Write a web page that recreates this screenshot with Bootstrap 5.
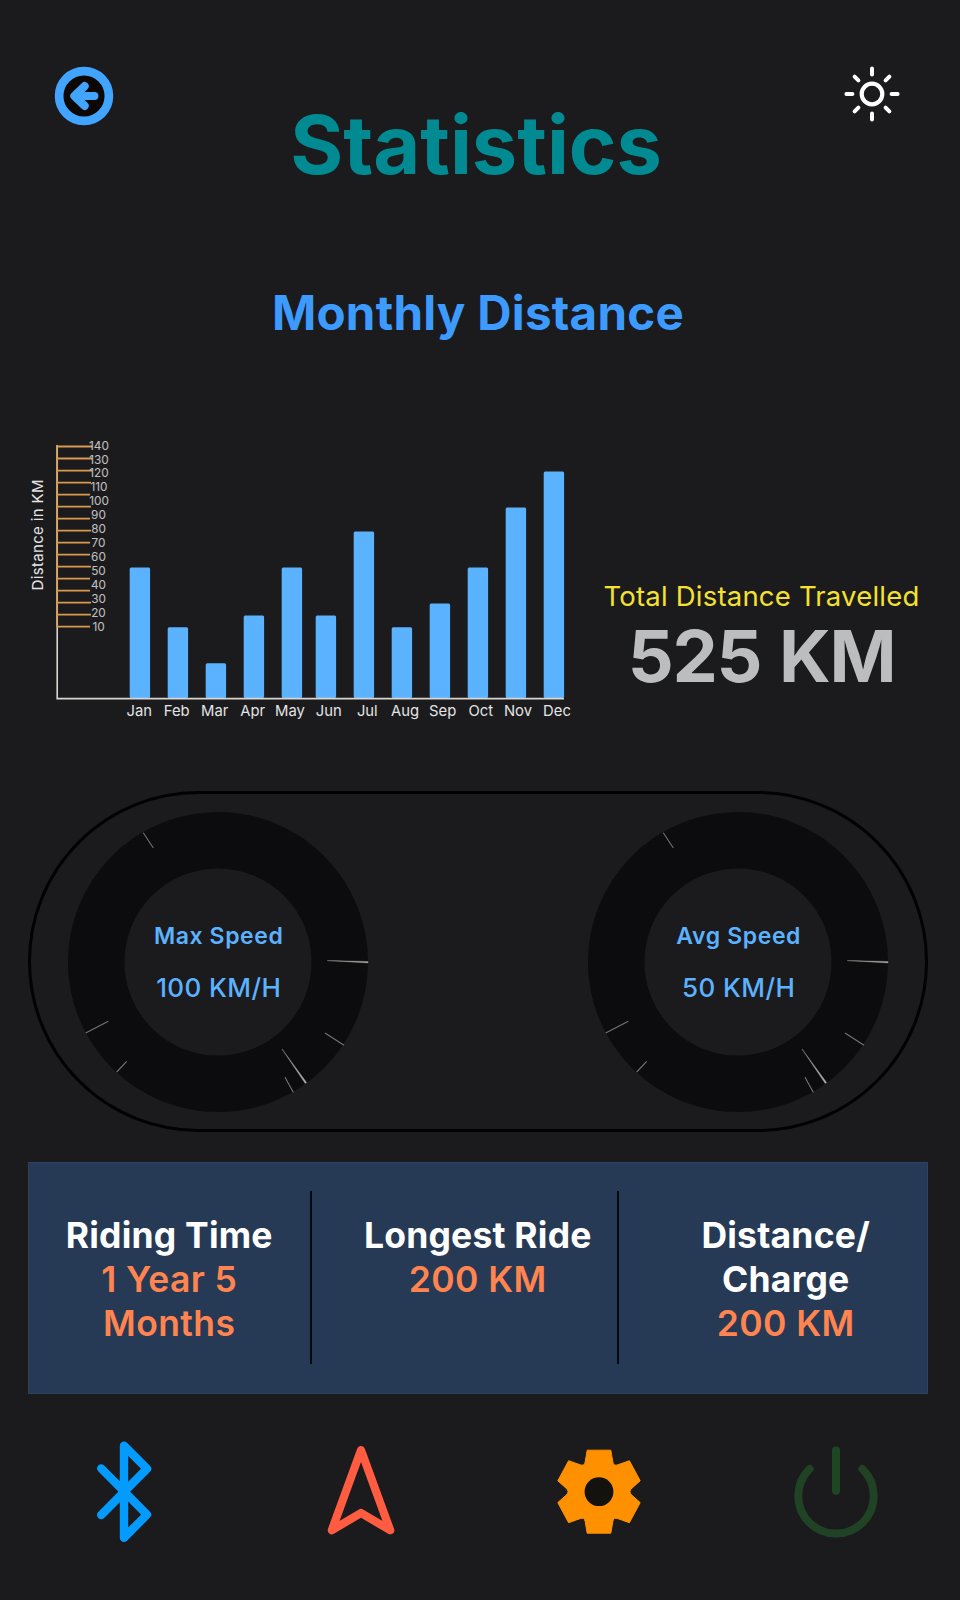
<!DOCTYPE html>
<html lang="en" data-bs-theme="dark">
<head>
<meta charset="utf-8">
<meta name="viewport" content="width=device-width, initial-scale=1">
<title>Statistics</title>
<link rel="stylesheet" href="https://cdn.jsdelivr.net/npm/bootstrap@5.3.0/dist/css/bootstrap.min.css">
<style>
  body { background: #1b1b1d; font-family: Inter, "Liberation Sans", sans-serif; }
  .screen { width: 960px; height: 1600px; }
  .screen svg { display: block; flex: none; }
  .top-bar { height: 283px; padding: 65.7px 60px 0 54px; }
  .page-title { margin-top: 34.3px; font-size: 81px; line-height: 90px; font-weight: 700; color: #018a92; padding-right: 6px; }
  .section-title { font-size: 47.5px; line-height: 60px; font-weight: 700; color: #3d9bff; letter-spacing: .25px; padding-right: 4px; }
  .chart-row { margin-top: 87px; height: 300px; }
  .chart text { fill: #e4e4e4; }
  .total-box { width: 343px; padding-top: 147px; }
  .total-label { font-size: 27.5px; line-height: 38px; color: #f5e131; letter-spacing: .2px; }
  .total-value { font-size: 72px; line-height: 80px; font-weight: 700; color: #bcbdbf; margin-top: .5px; letter-spacing: -1.3px; word-spacing: 2px; }
  .speeds { margin: 61px 32px 0 28px; height: 341px; border: 3px solid #020203; border-radius: 171px; padding: 0 36px; }
  .dial { width: 302px; height: 302px; }
  .dial-text { position: absolute; inset: 0; color: #5cb2ff; font-weight: 500; padding-left: 1.4px; }
  .dial-name { font-size: 23px; line-height: 30px; margin-top: 110px; font-weight: 600; letter-spacing: .6px; }
  .dial-value { font-size: 26px; line-height: 30px; margin-top: 22px; letter-spacing: .4px; }
  .summary { margin: 30px 32.5px 0 28px; height: 231.5px; background: #263a55; border: 1px solid #2b4263; }
  .summary-cell { padding-top: 51px; font-size: 35.5px; line-height: 44px; font-weight: 700; color: #fff; letter-spacing: .2px; }
  .summary-cell b { font-weight: 600; color: #ff8450; display: block; letter-spacing: .4px; }
  .cell-riding { width: 280.5px; }
  .cell-longest { width: 305.5px; padding-left: 27px; }
  .cell-charge { padding-left: 26px; }
  .rule { width: 2px; height: 173px; background: #040910; margin-top: 28px; flex: none; }
  .bottom-nav { margin-top: 42.5px; padding: 0 74px; }
</style>
</head>
<body>
<main class="screen overflow-hidden">
  <header class="top-bar d-flex align-items-start">
    <svg width="60" height="60" viewBox="-30 -30 60 60" fill="none" stroke="#41a5ff">
      <circle r="24.9" stroke-width="8.7" fill="#0c0806"/>
      <path d="M10.3 0H-8M.6-9.8L-9.6 0L.6 9.8" stroke-width="8.2" stroke-linecap="round" stroke-linejoin="round"/>
      <path d="M-9 0L0-8V8Z" fill="#41a5ff" stroke="none"/>
    </svg>
    <h1 class="page-title flex-grow-1 text-center mb-0">Statistics</h1>
    <svg width="56" height="56" viewBox="-28 -28 56 56" fill="none" stroke="#fff" stroke-width="4.2">
      <circle r="10.3"/>
      <path stroke-linecap="round" stroke-width="4" d="M0-25.6V-19.6M0 19.6V25.6M-25.6 0H-19.6M19.6 0H25.6M-17.4-17.4L-13.6-13.6M17.4-17.4L13.6-13.6M-17.4 17.4L-13.6 13.6M17.4 17.4L13.6 13.6"/>
    </svg>
  </header>

  <h2 class="section-title text-center mb-0">Monthly Distance</h2>

  <section class="chart-row d-flex">
    <svg class="chart" width="590" height="300" viewBox="0 430 590 300">
      <g fill="#5bb2ff">
        <rect x="129.7" y="567.5" width="20.4" height="130.5" rx="1.5"/>
        <rect x="167.7" y="627.3" width="20.4" height="70.7" rx="1.5"/>
        <rect x="205.7" y="663.3" width="20.4" height="34.7" rx="1.5"/>
        <rect x="243.7" y="615.4" width="20.4" height="82.6" rx="1.5"/>
        <rect x="281.7" y="567.5" width="20.4" height="130.5" rx="1.5"/>
        <rect x="315.7" y="615.4" width="20.4" height="82.6" rx="1.5"/>
        <rect x="353.7" y="531.5" width="20.4" height="166.5" rx="1.5"/>
        <rect x="391.7" y="627.3" width="20.4" height="70.7" rx="1.5"/>
        <rect x="429.7" y="603.4" width="20.4" height="94.6" rx="1.5"/>
        <rect x="467.7" y="567.5" width="20.4" height="130.5" rx="1.5"/>
        <rect x="505.7" y="507.5" width="20.4" height="190.5" rx="1.5"/>
        <rect x="543.7" y="471.5" width="20.4" height="226.5" rx="1.5"/>
      </g>
      <path d="M57.2 445V698.6H564" fill="none" stroke="#d9d6cf" stroke-width="1.6"/>
      <path d="M57.2 445V627" stroke="#e0a860" stroke-width="1.7"/>
      <path d="M57 446.5H92M57 458.5H92M57 470.6H92M57 482.6H91M57 494.6H90M57 506.6H91M57 518.7H90M57 530.7H91M57 542.7H90M57 554.7H90M57 566.7H91M57 578.7H90M57 590.7H90M57 602.7H91M57 614.7H91M57 626.7H90" stroke="#d99a4e" stroke-width="1.8"/>
      <g font-size="11.8" text-anchor="middle" style="opacity:.82">
        <text x="99" y="449.5">140</text><text x="99" y="463.5">130</text><text x="99" y="477.4">120</text><text x="99" y="491.4">110</text><text x="99" y="505.4">100</text><text x="98.5" y="519.4">90</text><text x="98.5" y="533.4">80</text><text x="98.5" y="547.3">70</text><text x="98.5" y="561.3">60</text><text x="98.5" y="575.3">50</text><text x="98.5" y="589.3">40</text><text x="98.5" y="603.2">30</text><text x="98.5" y="617.2">20</text><text x="98.5" y="631.2">10</text>
      </g>
      <g font-size="14.8" text-anchor="middle">
        <text x="139.3" y="715.7">Jan</text><text x="176.7" y="715.7">Feb</text><text x="214.7" y="715.7">Mar</text><text x="252.7" y="715.7">Apr</text><text x="290" y="715.7">May</text><text x="328.7" y="715.7">Jun</text><text x="367.3" y="715.7">Jul</text><text x="405" y="715.7">Aug</text><text x="442.7" y="715.7">Sep</text><text x="480.7" y="715.7">Oct</text><text x="518" y="715.7">Nov</text><text x="557" y="715.7">Dec</text>
      </g>
      <text transform="translate(43.3 535) rotate(-90)" text-anchor="middle" font-size="15" textLength="111">Distance in KM</text>
    </svg>
    <div class="total-box text-center text-nowrap">
      <div class="total-label">Total Distance Travelled</div>
      <div class="total-value">525 KM</div>
    </div>
  </section>

  <section class="speeds d-flex justify-content-between align-items-center">
    <div class="dial position-relative">
      <svg width="302" height="302" viewBox="-151 -151 302 302">
        <defs>
          <g id="dial-ring">
            <circle r="121.8" fill="none" stroke="#0c0c0f" stroke-width="56.5"/>
            <path d="M-74.7-129.3L-64.7-114M-132.3 71L-109.7 59.3M-101.3 110L-91.3 99.3M75.3 130.3L67 115.3M126 83.3L107 71" stroke="#77736f" stroke-width="1.1"/>
            <path d="M109.3-1.4L150-.5V.9ZM64 87L88.6 120.5L87.2 121.5Z" fill="#b5b1ad" stroke="#8b8783" stroke-width=".5"/>
          </g>
        </defs>
        <use href="#dial-ring"/>
      </svg>
      <div class="dial-text text-center">
        <div class="dial-name">Max Speed</div>
        <div class="dial-value">100 KM/H</div>
      </div>
    </div>
    <div class="dial position-relative">
      <svg width="302" height="302" viewBox="-151 -151 302 302"><use href="#dial-ring"/></svg>
      <div class="dial-text text-center">
        <div class="dial-name">Avg Speed</div>
        <div class="dial-value">50 KM/H</div>
      </div>
    </div>
  </section>

  <section class="summary d-flex text-center text-nowrap">
    <div class="summary-cell cell-riding">Riding Time<b>1 Year 5<br>Months</b></div>
    <div class="rule"></div>
    <div class="summary-cell cell-longest">Longest Ride<b>200 KM</b></div>
    <div class="rule"></div>
    <div class="summary-cell cell-charge flex-grow-1">Distance/<br>Charge<b>200 KM</b></div>
  </section>

  <nav class="bottom-nav d-flex justify-content-between">
    <svg width="100" height="110" viewBox="-50 -55.7 100 110" fill="none" stroke="#049bff" stroke-width="8.4" stroke-linecap="round" stroke-linejoin="round">
      <path d="M-22.8-23.3L23 22.9L0 46V-46L23-22.9L-22.8 23.3"/>
    </svg>
    <svg width="100" height="110" viewBox="-50 -55.7 100 110" fill="none" stroke="#ff5c41" stroke-width="8.2" stroke-linejoin="round">
      <path d="M0-41.5L29.2 38.5L0 21.3L-29.2 38.5Z"/>
    </svg>
    <svg width="100" height="110" viewBox="-50 -55.7 100 110">
      <path fill="#ff9100" stroke="#ff9100" stroke-linejoin="round" d="M-11.8-41.5L11.8-41.5L13.8-30Q14.5-25.1 19.1-27L30.4-31L41.2-10.9L32.9-3.5Q29 0 32.9 3.5L41.2 10.9L30.4 31L19.1 27Q14.5 25.1 13.8 30L11.8 41.5H-11.8L-13.8 30Q-14.5 25.1-19.1 27L-30.4 31L-41.2 10.9L-32.9 3.5Q-29 0-32.9-3.5L-41.2-10.9L-30.4-31L-19.1-27Q-14.5-25.1-13.8-30Z"/>
      <circle r="14.4" fill="#14120e"/>
    </svg>
    <svg width="100" height="110" viewBox="-50 -55.7 100 110" fill="none" stroke="#204325" stroke-width="8" stroke-linecap="round">
      <path d="M-26.4-22.7A37.7 37.7 0 1 0 26.4-22.7"/>
      <path d="M0-41.3V-1" stroke="#1d4722"/>
    </svg>
  </nav>
</main>
<script src="https://cdn.jsdelivr.net/npm/bootstrap@5.3.0/dist/js/bootstrap.bundle.min.js"></script>
</body>
</html>
